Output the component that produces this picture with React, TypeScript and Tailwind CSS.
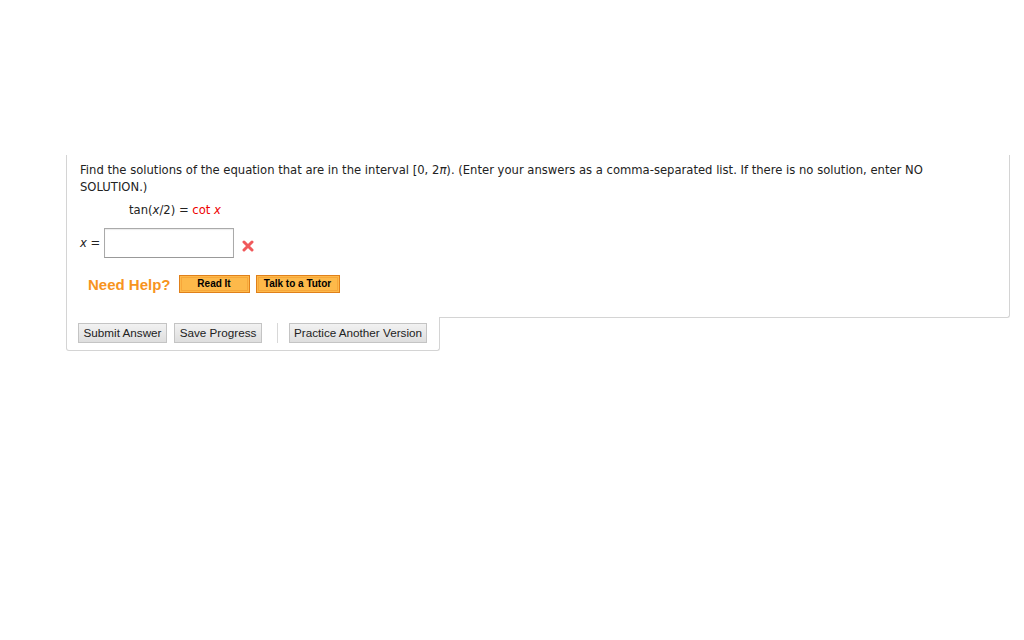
export default function App() {
  return (
    <div className="w-[1024px] h-[640px] bg-white overflow-hidden">
      <div className="ml-[66px] pt-[155px] w-[944px]">
        {/* Question box */}
        <div
          className="h-[163px] border-l border-r border-b border-[#d4d4d4] rounded-br-[3px] pl-[13px] pr-[60px] pt-[7px] text-[#222] text-[11.6px] leading-[17px]"
          style={{ fontFamily: '"DejaVu Sans", Verdana, sans-serif' }}
        >
          <p>
            Find the solutions of the equation that are in the interval [0, 2<i>π</i>). (Enter your answers as a
            comma-separated list. If there is no solution, enter NO SOLUTION.)
          </p>

          <div className="mt-[6px] pl-[49px]">
            tan(<i>x</i>/2) = <span className="text-[#e00]">cot <i>x</i></span>
          </div>

          <div className="mt-[9px] flex items-center">
            <span className="mr-[4px]">
              <i>x</i> =
            </span>
            <div className="w-[130px] h-[30px] border border-[#aaa] border-b-[#999] shadow-[inset_0_1px_1px_rgba(0,0,0,0.08)]" />
            <svg viewBox="0 0 12 12" className="w-[12px] h-[12px] ml-[8px] mt-[6px]">
              <path d="M2 2 L10 10 M10 2 L2 10" stroke="#f0595b" strokeWidth="3" strokeLinecap="round" />
            </svg>
          </div>

          <div
            className="mt-[17px] ml-[8px] flex items-center"
            style={{ fontFamily: '"Liberation Sans", Arial, sans-serif' }}
          >
            <span className="text-[15px] font-bold text-[#f7941e] mr-[8px] whitespace-nowrap">Need Help?</span>
            <button className="w-[71px] h-[18px] border border-[#e0801a] bg-[#fdb94a] p-px">
              <span className="flex h-full items-center justify-center border border-[#f7a73a] text-[10px] font-bold text-black leading-none whitespace-nowrap">
                Read It
              </span>
            </button>
            <button className="ml-[6px] w-[84px] h-[18px] border border-[#e0801a] bg-[#fdb94a] p-px">
              <span className="flex h-full items-center justify-center border border-[#f7a73a] text-[10px] font-bold text-black leading-none whitespace-nowrap">
                Talk to a Tutor
              </span>
            </button>
          </div>
        </div>

        {/* Button bar */}
        <div
          className="relative -mt-px w-[374px] h-[34px] bg-white border-l border-r border-b border-[#d4d4d4] rounded-b-[3px] flex items-center pl-[11px] pb-[2px] text-[11.7px] text-[#222]"
          style={{ fontFamily: '"Liberation Sans", Arial, sans-serif' }}
        >
          <button className="h-[20px] w-[89px] whitespace-nowrap border border-[#c4c4c4] bg-gradient-to-b from-[#f2f2f2] to-[#dedede]">
            Submit Answer
          </button>
          <button className="ml-[7px] h-[20px] w-[88px] whitespace-nowrap border border-[#c4c4c4] bg-gradient-to-b from-[#f2f2f2] to-[#dedede]">
            Save Progress
          </button>
          <div className="ml-[15px] w-px h-[20px] bg-[#d8d8d8]" />
          <button className="ml-[11px] h-[20px] w-[138px] whitespace-nowrap border border-[#c4c4c4] bg-gradient-to-b from-[#f2f2f2] to-[#dedede]">
            Practice Another Version
          </button>
        </div>
      </div>
    </div>
  );
}
